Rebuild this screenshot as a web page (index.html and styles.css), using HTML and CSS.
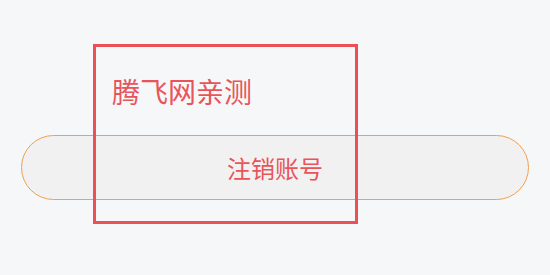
FILE: index.html
```html
<!DOCTYPE html>
<html lang="zh-CN">
<head>
<meta charset="utf-8">
<title>注销账号</title>
<link rel="stylesheet" href="styles.css">
</head>
<body>
<main class="page">
  <h1 class="site-title">腾飞网亲测</h1>
  <button class="logout-btn" type="button">注销账号</button>
  <div class="highlight-box"></div>
</main>
</body>
</html>
```
FILE: styles.css
```css
html, body {
  margin: 0;
  padding: 0;
}
body {
  background: #f6f7f9;
  font-family: "Noto Sans CJK SC", "Noto Sans", sans-serif;
  width: 550px;
  height: 275px;
  overflow: hidden;
}
.page {
  position: relative;
  padding: 77px 21px 0;
  display: flex;
  flex-direction: column;
}
.site-title {
  margin: 0 0 30px 91px;
  font-size: 28px;
  line-height: 28px;
  font-weight: 400;
  color: #e8545a;
}
.logout-btn {
  height: 65px;
  margin: 0;
  padding: 0;
  border: 1px solid #f0a052;
  border-radius: 33px;
  background: #f2f1f1;
  color: #e8545a;
  font-family: inherit;
  font-size: 24px;
  line-height: 24px;
  text-align: center;
}
.highlight-box {
  position: absolute;
  left: 93px;
  top: 44px;
  width: 265px;
  height: 180px;
  box-sizing: border-box;
  border: 3px solid #ec4f55;
  pointer-events: none;
}
```
